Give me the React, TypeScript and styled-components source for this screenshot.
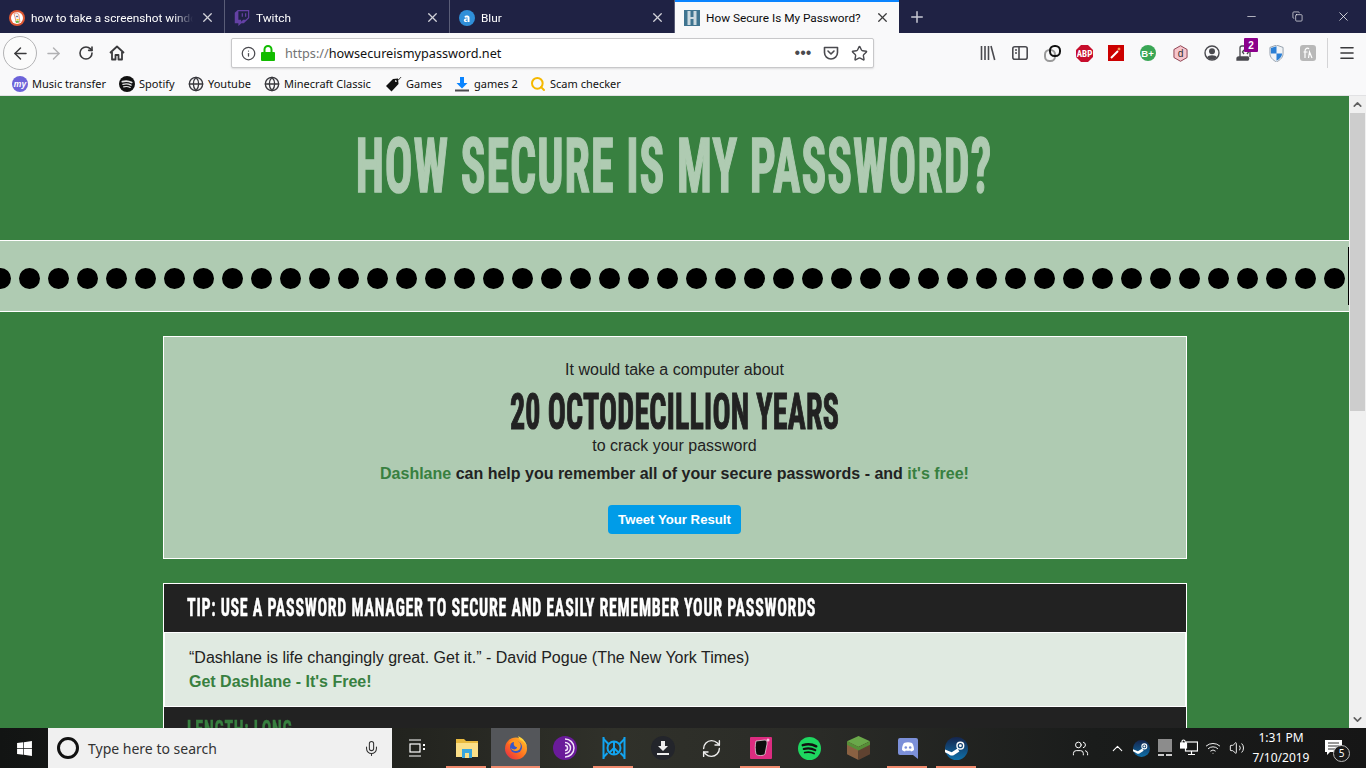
import React from "react";
import styled, { createGlobalStyle } from "styled-components";
import { ArrowLeft, ArrowRight, RotateCw, Info, Star, X, Plus, Minus, Menu, Mic, Search, Globe, ChevronUp, ChevronDown, RefreshCw, Volume2, Wifi, Users, Copy } from "lucide-react";
import { FaWindows, FaTwitch } from "react-icons/fa";

const Global = createGlobalStyle`
  html, body { margin: 0; padding: 0; width: 1366px; height: 768px; overflow: hidden; background: #388040; }
  #root { width: 1366px; height: 768px; }
  * { box-sizing: border-box; }
`;

const Screen = styled.div`
  width: 1366px; height: 768px; display: flex; flex-direction: column; overflow: hidden;
  font-family: "Liberation Sans", Arial, sans-serif;
`;

const TabBar = styled.div`
  height: 33px; background: #1f2244; display: flex; flex: none; color: #fff;
  font-family: Roboto, sans-serif; font-size: 11.8px;
`;
const Tab = styled.div<{ $active?: boolean }>`
  width: 224px; height: 33px; flex: none; display: flex; align-items: center; padding: 0 9px;
  margin-right: 1px; position: relative; gap: 6px;
  background: ${p => (p.$active ? "#f9f9fa" : "transparent")};
  color: ${p => (p.$active ? "#0c0c0d" : "#fff")};
  border-top: 2px solid ${p => (p.$active ? "#0a84ff" : "transparent")};
  box-shadow: ${p => (p.$active ? "none" : "1px 0 0 #5a5d77")};
`;
const TabTitle = styled.span`
  flex: 1; min-width: 0; white-space: nowrap; overflow: hidden; text-overflow: clip;
  -webkit-mask-image: linear-gradient(to right, #000 88%, transparent 100%);
  mask-image: linear-gradient(to right, #000 88%, transparent 100%);
`;
const ActiveTitle = styled.span`
  flex: 1; min-width: 0; white-space: nowrap;
`;
const Favicon = styled.span`
  width: 16px; height: 16px; flex: none; display: flex; align-items: center; justify-content: center;
`;
const TabClose = styled.span`
  flex: none; width: 16px; display: flex; align-items: center; justify-content: center; opacity: .8;
`;
const NewTab = styled.div`
  width: 34px; display: flex; align-items: center; justify-content: center; color: #c8c9d3;
`;
const WindowButtons = styled.div`
  margin-left: auto; display: flex; color: #fff;
`;
const WindowButton = styled.div`
  width: 46px; height: 33px; display: flex; align-items: center; justify-content: center;
`;

const NavBar = styled.div`
  height: 35px; padding-top: 5px; flex: none; background: #f9f9fa; display: flex; align-items: center; position: relative;
`;
const BackButton = styled.div`
  width: 34px; height: 34px; margin-left: 3px; border-radius: 50%; border: 1px solid #b3b3b5; background: #fbfbfb;
  display: flex; align-items: center; justify-content: center; color: #3a3a3c; flex: none;
`;
const NavIcon = styled.div<{ $w: number; $c?: string }>`
  width: ${p => p.$w}px; display: flex; justify-content: center; align-items: center; flex: none;
  color: ${p => p.$c ?? "#3a3a3c"};
`;
const UrlBar = styled.div`
  width: 643px; height: 30px; margin-left: 100px; background: #fff; border: 1px solid #c8c8ca; border-radius: 2px;
  box-shadow: 0 1px 2px rgba(0,0,0,.12); display: flex; align-items: center; padding: 0 0 0 9px; flex: none; color: #4a4a4f;
`;
const UrlText = styled.span`
  font-family: "Noto Sans", sans-serif; font-size: 12.7px; color: #111; margin-left: 5px; flex: 1;
`;
const UrlScheme = styled.span` color: #737373; `;
const UrlAction = styled.span<{ $w: number }>`
  width: ${p => p.$w}px; display: flex; justify-content: center; align-items: center; flex: none;
`;
const ExtensionArea = styled.div`
  margin-left: 98px; display: flex; align-items: center; height: 28px; position: relative;
`;
const Extension = styled.div`
  width: 32px; display: flex; justify-content: center; align-items: center; flex: none; position: relative; color: #4a4a4f;
`;
const Badge = styled.span`
  position: absolute; left: 16px; top: -7px; width: 14px; height: 14px; background: #8b008b; color: #fff; font-size: 10px; font-weight: 700;
  display: flex; align-items: center; justify-content: center; border-radius: 1px;
`;
const ToolbarDivider = styled.div`
  width: 1px; height: 30px; background: #d4d4d6; margin-left: 3px;
`;
const MenuButton = styled.div`
  width: 38px; display: flex; justify-content: center; color: #3a3a3c;
`;

const Bookmarks = styled.div`
  height: 28px; flex: none; background: #f9f9fa; border-bottom: 1px solid #e2e2e4; display: flex; align-items: center;
  padding: 4px 0 0 12px; gap: 12px; font-family: "Noto Sans", sans-serif; font-size: 11px; color: #111;
`;
const Bookmark = styled.div`
  display: flex; align-items: center; gap: 4px; white-space: nowrap;
`;
const BookmarkIcon = styled.span`
  width: 16px; height: 16px; display: flex; align-items: center; justify-content: center; flex: none; color: #38383d;
`;
const BookmarkLabel = styled.span<{ $w: number }>`
  width: ${p => p.$w}px; display: block;
`;

const Viewport = styled.div`
  flex: 1; min-height: 0; display: flex; background: #388040;
`;
const Page = styled.div`
  width: 1349px; flex: none; overflow: hidden; display: flex; flex-direction: column; position: relative;
`;
const Scrollbar = styled.div`
  width: 17px; flex: none; background: #f0f0f0; display: flex; flex-direction: column; color: #606060;
`;
const ScrollButton = styled.div`
  height: 17px; flex: none; display: flex; align-items: center; justify-content: center;
`;
const ScrollThumb = styled.div`
  height: 298px; margin: 0 1px; background: #cdcdcd; flex: none;
`;
const ScrollSpace = styled.div` flex: 1; `;

const Condensed = styled.span<{ $tall: number; $stroke: number }>`
  display: inline-block; white-space: nowrap; transform: scaleY(${p => p.$tall}); line-height: .8;
  font-family: Roboto, sans-serif; font-stretch: 75%; font-weight: 700;
  -webkit-text-stroke: ${p => p.$stroke}px currentColor;
`;
const Header = styled.header`
  height: 144px; flex: none; display: flex; align-items: center; justify-content: center; padding: 0 1px 4px 0;
`;
const Title = styled.h1`
  margin: 0; font-size: 46px; line-height: 80px; letter-spacing: 1px; color: #afcbb2; font-weight: 700;
`;
const PasswordBand = styled.div`
  height: 72px; flex: none; background: #afcbb2; border-top: 1px solid #fff; border-bottom: 1px solid #fff;
  display: flex; align-items: center; gap: 8px; margin-left: -10.5px; position: relative; overflow: hidden; padding-top: 4px;
`;
const Dot = styled.span`
  width: 21px; height: 21px; flex: none; border-radius: 50%; background: #000;
`;
const Caret = styled.span`
  position: absolute; left: 1358px; top: 6px; width: 1px; height: 58px; background: #000;
`;
const Content = styled.main`
  width: 1024px; margin: 24px auto 0 163px; flex: none; color: #222;
`;
const ResultCard = styled.section`
  height: 223px; background: #afcbb2; border: 1px solid #fff; display: flex; flex-direction: column; align-items: center;
  padding: 22px 1px 0 0; font-size: 16px;
`;
const PlainLine = styled.div` height: 22px; line-height: 22px; `;
const BigLine = styled.div`
  height: 46px; line-height: 46px; margin-top: 8px; font-size: 30px; letter-spacing: .2px; color: #222;
`;
const PitchLine = styled.div`
  margin-top: 6px; height: 22px; line-height: 22px; font-weight: 700;
`;
const GreenLink = styled.span` color: #388040; font-weight: 700; `;
const TweetButton = styled.button`
  margin-top: 20px; width: 133px; height: 29px; border: 0; border-radius: 4px; background: #009ce8; color: #fff;
  font: 700 13.2px "Liberation Sans", sans-serif; padding: 0;
`;
const TipCard = styled.section`
  margin-top: 24px; border: 1px solid #fff; border-bottom: 0; background: #fff;
`;
const TipHeader = styled.div`
  height: 48px; background: #222; color: #fff; display: flex; align-items: center; padding-left: 23px; font-size: 16px; letter-spacing: .7px;
`;
const TipBody = styled.div`
  margin: 1px 1px 0; height: 73px; background: #e0eae1; padding: 13px 0 0 24px; font-size: 16px; line-height: 24px;
`;
const LengthHeader = styled.div`
  margin-top: 1px; height: 48px; background: #222; color: #388040; display: flex; align-items: center; padding: 0 0 2px 23px; font-size: 16px; letter-spacing: .7px;
`;

const Taskbar = styled.div`
  height: 40px; flex: none; display: flex; color: #fff; position: relative; padding-right: 13px;
  background: linear-gradient(to right, #121413 0%, #23241f 30%, #30312a 45%, #2a2b27 60%, #1a1c1b 80%, #161616 100%);
`;
const StartButton = styled.div`
  width: 48px; display: flex; align-items: center; justify-content: center; flex: none; color: #fff;
`;
const SearchBox = styled.div`
  width: 344px; flex: none; background: #f0f0f0; color: #333; display: flex; align-items: center; padding: 0 12px 0 9px;
  font-family: "Noto Sans", sans-serif; font-size: 14px;
`;
const Cortana = styled.span`
  width: 22px; height: 22px; border: 3px solid #111; border-radius: 50%; margin-right: 9px; flex: none;
`;
const SearchHint = styled.span` flex: 1; `;
const TaskView = styled.div`
  width: 50px; flex: none; display: flex; align-items: center; justify-content: center;
`;
const TaskItem = styled.div<{ $open?: boolean; $active?: boolean }>`
  width: 49px; height: 40px; flex: none; display: flex; align-items: center; justify-content: center; position: relative;
  background: ${p => (p.$active ? "#54565a" : "transparent")};
  &::after {
    content: ""; position: absolute; bottom: 0; height: 2px; background: #f08a6d;
    left: ${p => (p.$active ? "0" : "4px")}; right: ${p => (p.$active ? "0" : "5px")};
    display: ${p => (p.$open ? "block" : "none")};
  }
`;
const TraySpace = styled.div` flex: 1; `;
const Tray = styled.div`
  display: flex; align-items: center; color: #fff; flex: none;
`;
const TrayIcon = styled.span<{ $w: number }>`
  width: ${p => p.$w}px; display: flex; align-items: center; justify-content: center; flex: none;
`;
const Clock = styled.div`
  width: 64px; flex: none; text-align: center; font-family: "Noto Sans", sans-serif; font-size: 12px; line-height: 20px;
`;
const Notification = styled.div`
  width: 40px; flex: none; display: flex; align-items: center; justify-content: center; position: relative;
`;
const NotifyCount = styled.span`
  position: absolute; left: 20px; top: 17px; width: 17px; height: 17px; border: 1px solid #bbb; border-radius: 50%; background: #1a1a1a;
  font-family: "Noto Sans", sans-serif; font-size: 10px; line-height: 15px; text-align: center;
`;

const DuckIcon = () => (
  <svg width="16" height="16" viewBox="0 0 16 16"><circle cx="8" cy="8" r="8" fill="#de5833" /><circle cx="8" cy="8" r="6" fill="#fff" /><path d="M5 4c2-2 5-1 5 2l1 6H7L6 7z" fill="#f4f4f4" stroke="#de5833" strokeWidth=".6" /><circle cx="8" cy="6.500" r=".8" fill="#2d4f8e" /><path d="M7 9h3l-1 1.500z" fill="#fdd20a" /><path d="M6.500 11l3-.5.5 2-3 .5z" fill="#65bc46" /></svg>
);
const BlurIcon = () => (
  <svg width="16" height="16" viewBox="0 0 16 16"><circle cx="8" cy="8" r="8" fill="#2f8fd9" /><path d="M5.500 6.200c1-1.200 5-1.200 5 1.200V12H9v-.7c-1.500 1.300-4.200 1-4.200-1 0-2 2.700-2 4.200-1.800 0-1.300-1.900-1.300-3-.6zM9 9.600c-1-.2-2.500-.2-2.500.7 0 .9 1.800.9 2.500 0z" fill="#fff" /></svg>
);
const HIcon = () => (
  <svg width="16" height="16" viewBox="0 0 16 16"><rect width="16" height="16" fill="#3f7490" /><rect x="3.500" y="1" width="3" height="14" fill="#cbd9e0" /><rect x="9.500" y="1" width="3" height="14" fill="#cbd9e0" /><rect x="6" y="7" width="4" height="2" fill="#cbd9e0" /></svg>
);
const HomeIcon = () => (
  <svg width="16" height="16" viewBox="0 0 16 16" fill="none" stroke="#3a3a3c" strokeWidth="1.800" strokeLinejoin="round"><path d="M1 8l7-6.500L15 8" /><path d="M3 7v7.500h3.500V10h3v4.500H13V7" /></svg>
);
const LockIcon = () => (
  <svg width="14" height="16" viewBox="0 0 14 16"><path d="M3.500 7V4.500a3.500 3.500 0 0 1 7 0V7" fill="none" stroke="#12bc00" strokeWidth="2" /><rect y="7" width="14" height="9" rx="1" fill="#12bc00" /></svg>
);
const PocketIcon = () => (
  <svg width="16" height="16" viewBox="0 0 16 16" fill="none" stroke="#4a4a4f" strokeWidth="1.600"><path d="M1.500 2.500h13v5a6.500 6.500 0 0 1-13 0z" strokeLinejoin="round" /><path d="M5 6l3 3 3-3" strokeLinecap="round" strokeLinejoin="round" /></svg>
);
const LibraryIcon = () => (
  <svg width="16" height="16" viewBox="0 0 16 16" fill="none" stroke="#4a4a4f" strokeWidth="1.600"><path d="M1.500 1v14M5 1v14M8.500 1v14M11 1l3.700 14" /></svg>
);
const SidebarIcon = () => (
  <svg width="16" height="16" viewBox="0 0 16 16" fill="none" stroke="#4a4a4f" strokeWidth="1.600"><rect x=".8" y="1.800" width="14.400" height="12.400" rx="2" /><path d="M7 2v12M3 5h2M3 8h2" /></svg>
);
const ChainIcon = () => (
  <svg width="17" height="17" viewBox="0 0 17 17" fill="none"><rect x="1" y="5" width="10" height="11" rx="4.500" stroke="#9a9a9a" strokeWidth="2" /><rect x="6" y="1" width="10" height="10" rx="4.500" stroke="#111" strokeWidth="2" /></svg>
);
const AbpIcon = () => (
  <svg width="17" height="17" viewBox="0 0 17 17"><path d="M5 0h7l5 5v7l-5 5H5l-5-5V5z" fill="#c70d2c" /><text x="8.500" y="11.500" textAnchor="middle" fontFamily="Roboto" fontStretch="75%" fontWeight="700" fontSize="9" fill="#fff">ABP</text></svg>
);
const WandIcon = () => (
  <svg width="16" height="16" viewBox="0 0 16 16"><rect width="16" height="16" fill="#cc0000" /><path d="M3 13L10 6" stroke="#fff" strokeWidth="2" /><path d="M11 2l.6 1.600L13 4l-1.400.6L11 6l-.6-1.400L9 4l1.400-.4z" fill="#ffd27a" /></svg>
);
const BPlusIcon = () => (
  <svg width="16" height="16" viewBox="0 0 16 16"><circle cx="8" cy="8" r="8" fill="#3aa655" /><text x="7.500" y="11.500" textAnchor="middle" fontFamily="Liberation Sans" fontWeight="700" fontSize="9.500" fill="#fff">B+</text></svg>
);
const DIcon = () => (
  <svg width="15" height="17" viewBox="0 0 16 18"><path d="M8 .7l7 4v8.600l-7 4-7-4V4.700z" fill="#f7c5cc" stroke="#8a3b4a" strokeWidth="1" /><text x="8" y="13" textAnchor="middle" fontFamily="Liberation Sans" fontSize="11" fill="#333">d</text></svg>
);
const ProfileIcon = () => (
  <svg width="16" height="16" viewBox="0 0 16 16" fill="none"><circle cx="8" cy="8" r="7" stroke="#4a4a4f" strokeWidth="1.400" /><circle cx="8" cy="6.300" r="3" fill="#4a4a4f" /><path d="M3 12.500c1-3 9-3 10 0a7 7 0 0 1-10 0z" fill="#4a4a4f" /></svg>
);
const CodeIcon = () => (
  <svg width="16" height="16" viewBox="0 0 16 16" fill="none" stroke="#4a4a4f" strokeWidth="1.300"><path d="M4 12V3a2 2 0 0 1 2-2h8v11" /><path d="M1 15h11a2 2 0 0 0 0-3H3a1.500 1.500 0 0 0-2 1.500z" fill="#4a4a4f" /><path d="M8 5L6.500 7 8 9M11 5l1.500 2L11 9" /></svg>
);
const ShieldIcon = () => (
  <svg width="15" height="17" viewBox="0 0 16 18"><path d="M8 0l7 2.500V9c0 4-3 7-7 9-4-2-7-5-7-9V2.500z" fill="#f0f3f6" stroke="#7b8a98" strokeWidth=".8" /><path d="M8 1.200V9H2V3.200zM8 9h6c-.2 3.800-2.800 6-6 7.600z" fill="#2a7fd5" /></svg>
);
const GreyExtIcon = () => (
  <svg width="16" height="16" viewBox="0 0 16 16"><rect width="16" height="16" rx="3" fill="#b8b8b8" /><path d="M5 13V6c0-3 3-3.500 4-2M3.500 7h4M8.500 13l1-6 2.500 6" fill="none" stroke="#fff" strokeWidth="1.200" /></svg>
);
const MuIcon = () => (
  <svg width="16" height="16" viewBox="0 0 16 16"><circle cx="8" cy="8" r="8" fill="#6c63d9" /><text x="8" y="11" textAnchor="middle" fontFamily="Liberation Sans" fontStyle="italic" fontWeight="700" fontSize="8.500" fill="#fff">my</text></svg>
);
const SpotifyMark = ({ size, disc, arc }: { size: number; disc: string; arc: string }) => (
  <svg width={size} height={size} viewBox="0 0 24 24" fill="none" stroke={arc} strokeLinecap="round"><circle cx="12" cy="12" r="12" fill={disc} stroke="none" /><path d="M5 8.500c4.500-1.400 10-1 14 1.200" strokeWidth="2.600" /><path d="M6 12.500c4-1.100 8.500-.7 12 1.200" strokeWidth="2.200" /><path d="M7 16.200c3.300-.8 7-.5 9.800 1" strokeWidth="1.800" /></svg>
);
const TagIcon = () => (
  <svg width="16" height="16" viewBox="0 0 16 16"><path d="M0 10l7-7 5-.5L12.500 8l-7 7.500z" fill="#111" /><circle cx="10" cy="5" r="1" fill="#f9f9fa" /><path d="M10 5c2-1 4-2 5-4" fill="none" stroke="#111" strokeWidth=".8" /></svg>
);
const BookmarkDownload = () => (
  <svg width="16" height="16" viewBox="0 0 16 16"><path d="M6 1h4v6h3.500L8 12.500 2.500 7H6z" fill="#0a84ff" /><rect x="1" y="13.500" width="14" height="2" fill="#4a4a4f" /></svg>
);
const FolderIcon = () => (
  <svg width="22" height="20" viewBox="0 0 22 20"><path d="M0 1h8l2 2h12v16H0z" fill="#e8b93f" /><rect y="5" width="22" height="14" fill="#fbdf88" /><rect x="6" y="11" width="10" height="9" fill="#39a6dd" /><rect x="9" y="15" width="4" height="5" fill="#fbdf88" /></svg>
);
const FirefoxIcon = () => (
  <svg width="24" height="24" viewBox="0 0 24 24"><defs><linearGradient id="ff" x1="1" y1="0" x2="0" y2="1"><stop offset="0" stopColor="#ffcb2d" /><stop offset=".55" stopColor="#ff6b1e" /><stop offset="1" stopColor="#e0224f" /></linearGradient></defs><circle cx="12" cy="12.500" r="11" fill="url(#ff)" /><path d="M14 0c5 2 9 7 9 12 0-3-3-7-7-8z" fill="#ffd23c" /><circle cx="12" cy="11" r="6" fill="#3556c8" /><path d="M4 8c3-4 8-5 10-3 3 2 4 6 1 9-3 2-7 1-8-2 2 2 6 2 6-1-2 0-4-2-3-5-2 0-4 1-6 2z" fill="#ff9a1f" /></svg>
);
const TorIcon = () => (
  <svg width="24" height="24" viewBox="0 0 24 24" fill="none"><circle cx="12" cy="12" r="12" fill="#6a1b9a" /><path d="M12 3a9 9 0 0 1 0 18M12 6.500a5.500 5.500 0 0 1 0 11M12 9.500a2.500 2.500 0 0 1 0 5" stroke="#f0e2f8" strokeWidth="1.500" /></svg>
);
const PeaceIcon = () => (
  <svg width="24" height="24" viewBox="0 0 24 24" fill="none" stroke="#12a4f0" strokeWidth="2"><path d="M1.500 1v22M22.500 1v22" /><circle cx="12" cy="12" r="6.500" /><path d="M12 5.500v13M12 12l-4.600 4.600M12 12l4.600 4.600M1.500 3l5 5M22.500 3l-5 5M1.500 21l4-4M22.500 21l-4-4" /></svg>
);
const DownloaderIcon = () => (
  <svg width="24" height="24" viewBox="0 0 24 24"><circle cx="12" cy="12" r="12" fill="#23252b" /><path d="M10 5h4v5h3l-5 5-5-5h3z" fill="#eee" /><rect x="6" y="17" width="12" height="2" fill="#eee" /></svg>
);
const PinkIcon = () => (
  <svg width="22" height="22" viewBox="0 0 22 22"><rect x="0" y="0" width="22" height="22" rx="1" fill="#dc2c80" /><path d="M6 4l9-1c2 0 2 2 2 4l-2 10c-1 2-8 2-9 0-1-4-1-9 0-13z" fill="#0d0d0d" stroke="#eee" strokeWidth=".7" /><circle cx="18" cy="3" r="1.500" fill="#f5c3dc" /></svg>
);
const CubeIcon = () => (
  <svg width="23" height="24" viewBox="0 0 24 25"><path d="M12 0l12 5.500-12 6L0 5.500z" fill="#6aa84a" /><path d="M0 5.500l12 6V25L0 19z" fill="#8a6142" /><path d="M24 5.500l-12 6V25l12-6z" fill="#5f4230" /><path d="M0 5.500l12 6v3.500L0 9zM24 5.500l-12 6v3.500l12-6z" fill="#568f37" /></svg>
);
const DiscordTile = () => (
  <svg width="20" height="21" viewBox="0 0 20 21"><path d="M2 0h16a2 2 0 0 1 2 2v19l-5-4H2a2 2 0 0 1-2-2V2a2 2 0 0 1 2-2z" fill="#7c90d9" /><path d="M6 5c2.500-1 5.500-1 8 0 1.500 2 2 4 2 7-1 .9-2 1.300-3 1.500l-.8-1.100c-1.500.4-2.900.4-4.400 0L7 13.500c-1-.2-2-.6-3-1.500 0-3 .5-5 2-7z" fill="#fff" /><circle cx="7.800" cy="9.500" r="1.300" fill="#7c90d9" /><circle cx="12.200" cy="9.500" r="1.300" fill="#7c90d9" /></svg>
);
const SteamTile = ({ size }: { size: number }) => (
  <svg width={size} height={size} viewBox="0 0 24 24"><defs><linearGradient id={`st${size}`} x1="0" y1="0" x2="0" y2="1"><stop offset="0" stopColor="#15254d" /><stop offset="1" stopColor="#0f6fa8" /></linearGradient></defs><circle cx="12" cy="12" r="12" fill={`url(#st${size})`} /><circle cx="16" cy="9" r="3.500" fill="none" stroke="#fff" strokeWidth="1.500" /><circle cx="16" cy="9" r="1.500" fill="#fff" /><path d="M0 13l7 3 6-4 2 3-6 4c-2 1-4 0-5-1L0 16z" fill="#fff" /></svg>
);
const MonitorStack = () => (
  <svg width="16" height="18" viewBox="0 0 16 18"><rect x="1" y="0" width="14" height="13" fill="#8c8c8c" /><path d="M1 15h6v2H1zM9 15h6v2H9z" fill="#ccc" /></svg>
);
const NetLock = () => (
  <svg width="18" height="18" viewBox="0 0 18 18" fill="none" stroke="#fff" strokeWidth="1.200"><rect x="5.500" y="3" width="12" height="9" /><path d="M11.500 12v3M8 15.500h7" /><rect x=".5" y="4" width="6" height="5" fill="#fff" /><path d="M2 4V2.500a1.500 1.500 0 0 1 3 0" /></svg>
);
const NotifyIcon = () => (
  <svg width="17" height="16" viewBox="0 0 17 16"><path d="M0 0h17v12H5l-3 3v-3H0z" fill="#fff" /><path d="M3 3h11M3 6h11M3 9h7" stroke="#333" strokeWidth="1" /></svg>
);

const tabs = [
  { title: "how to take a screenshot windows", icon: <DuckIcon /> },
  { title: "Twitch", icon: <FaTwitch size={16} color="#6441a4" /> },
  { title: "Blur", icon: <BlurIcon /> },
];
const bookmarks = [
  { label: "Music transfer", w: 75, icon: <MuIcon /> },
  { label: "Spotify", w: 37, icon: <SpotifyMark size={16} disc="#111" arc="#e6e6e6" /> },
  { label: "Youtube", w: 44, icon: <Globe size={16} /> },
  { label: "Minecraft Classic", w: 90, icon: <Globe size={16} /> },
  { label: "Games", w: 36, icon: <TagIcon /> },
  { label: "games 2", w: 44, icon: <BookmarkDownload /> },
  { label: "Scam checker", w: 73, icon: <Search size={16} color="#f5b800" strokeWidth={3} /> },
];
const extensions = [
  <LibraryIcon />, <SidebarIcon />, <ChainIcon />, <AbpIcon />, <WandIcon />, <BPlusIcon />, <DIcon />, <ProfileIcon />,
];
const taskItems = [
  { icon: <FolderIcon />, open: true },
  { icon: <FirefoxIcon />, open: true, active: true },
  { icon: <TorIcon /> },
  { icon: <PeaceIcon />, open: true },
  { icon: <DownloaderIcon /> },
  { icon: <RefreshCw size={21} color="#eee" strokeWidth={1.600} /> },
  { icon: <PinkIcon />, open: true },
  { icon: <SpotifyMark size={23} disc="#1ed760" arc="#111" /> },
  { icon: <CubeIcon /> },
  { icon: <DiscordTile />, open: true },
  { icon: <SteamTile size={23} />, open: true },
];

export default function App() {
  return (
    <Screen>
      <Global />
      <TabBar>
        {tabs.map(t => (
          <Tab key={t.title}>
            <Favicon>{t.icon}</Favicon>
            <TabTitle>{t.title}</TabTitle>
            <TabClose><X size={15} /></TabClose>
          </Tab>
        ))}
        <Tab $active>
          <Favicon><HIcon /></Favicon>
          <ActiveTitle>How Secure Is My Password?</ActiveTitle>
          <TabClose><X size={15} /></TabClose>
        </Tab>
        <NewTab><Plus size={18} /></NewTab>
        <WindowButtons>
          <WindowButton><Minus size={13} strokeWidth={1.200} /></WindowButton>
          <WindowButton><Copy size={11} strokeWidth={1.400} /></WindowButton>
          <WindowButton><X size={15} strokeWidth={1.200} /></WindowButton>
        </WindowButtons>
      </TabBar>
      <NavBar>
        <BackButton><ArrowLeft size={19} strokeWidth={1.800} /></BackButton>
        <NavIcon $w={32} $c="#b1b1b3"><ArrowRight size={19} strokeWidth={1.800} /></NavIcon>
        <NavIcon $w={34}><RotateCw size={16} strokeWidth={2.400} /></NavIcon>
        <NavIcon $w={28}><HomeIcon /></NavIcon>
        <UrlBar>
          <Info size={15} />
          <NavIcon $w={24}><LockIcon /></NavIcon>
          <UrlText><UrlScheme>https://</UrlScheme>howsecureismypassword.net</UrlText>
          <UrlAction $w={28}>•••</UrlAction>
          <UrlAction $w={28}><PocketIcon /></UrlAction>
          <UrlAction $w={28}><Star size={17} strokeWidth={2} /></UrlAction>
        </UrlBar>
        <ExtensionArea>
          {extensions.map((e, i) => <Extension key={i}>{e}</Extension>)}
          <Extension><CodeIcon /><Badge>2</Badge></Extension>
          <Extension><ShieldIcon /></Extension>
          <Extension><GreyExtIcon /></Extension>
        </ExtensionArea>
        <ToolbarDivider />
        <MenuButton><Menu size={18} strokeWidth={2.200} /></MenuButton>
      </NavBar>
      <Bookmarks>
        {bookmarks.map(b => (
          <Bookmark key={b.label}>
            <BookmarkIcon>{b.icon}</BookmarkIcon>
            <BookmarkLabel $w={b.w}>{b.label}</BookmarkLabel>
          </Bookmark>
        ))}
      </Bookmarks>
      <Viewport>
        <Page>
          <Header>
            <Title><Condensed $tall={1.640} $stroke={.9}>HOW SECURE IS MY PASSWORD?</Condensed></Title>
          </Header>
          <PasswordBand>
            {Array.from({ length: 47 }, (_, i) => <Dot key={i} />)}
            <Caret />
          </PasswordBand>
          <Content>
            <ResultCard>
              <PlainLine>It would take a computer about</PlainLine>
              <BigLine><Condensed $tall={1.680} $stroke={.7}>20 OCTODECILLION YEARS</Condensed></BigLine>
              <PlainLine>to crack your password</PlainLine>
              <PitchLine><GreenLink>Dashlane</GreenLink> can help you remember all of your secure passwords - and <GreenLink>it's free!</GreenLink></PitchLine>
              <TweetButton>Tweet Your Result</TweetButton>
            </ResultCard>
            <TipCard>
              <TipHeader><Condensed $tall={1.580} $stroke={.3}>TIP: USE A PASSWORD MANAGER TO SECURE AND EASILY REMEMBER YOUR PASSWORDS</Condensed></TipHeader>
              <TipBody>
                “Dashlane is life changingly great. Get it.” - David Pogue (The New York Times)<br />
                <GreenLink>Get Dashlane - It's Free!</GreenLink>
              </TipBody>
              <LengthHeader><Condensed $tall={1.580} $stroke={.3}>LENGTH: LONG</Condensed></LengthHeader>
            </TipCard>
          </Content>
        </Page>
        <Scrollbar>
          <ScrollButton><ChevronUp size={13} strokeWidth={3} /></ScrollButton>
          <ScrollThumb />
          <ScrollSpace />
          <ScrollButton><ChevronDown size={13} strokeWidth={3} /></ScrollButton>
        </Scrollbar>
      </Viewport>
      <Taskbar>
        <StartButton><FaWindows size={17} /></StartButton>
        <SearchBox>
          <Cortana />
          <SearchHint>Type here to search</SearchHint>
          <Mic size={17} strokeWidth={1.500} />
        </SearchBox>
        <TaskView>
          <svg width="16" height="18" viewBox="0 0 16 18" fill="none" stroke="#fff" strokeWidth="1.200"><path d="M0 1h12M0 17h12" /><rect x="1" y="5" width="10" height="8" /><rect x="14" y="5" width="2" height="2" fill="#fff" stroke="none" /><rect x="14" y="9" width="2" height="2" fill="#fff" stroke="none" /></svg>
        </TaskView>
        {taskItems.map((t, i) => <TaskItem key={i} $open={t.open} $active={t.active}>{t.icon}</TaskItem>)}
        <TraySpace />
        <Tray>
          <TrayIcon $w={50}><Users size={17} strokeWidth={1.400} /></TrayIcon>
          <TrayIcon $w={24}><ChevronUp size={17} strokeWidth={1.500} /></TrayIcon>
          <TrayIcon $w={24}><SteamTile size={17} /></TrayIcon>
          <TrayIcon $w={24}><MonitorStack /></TrayIcon>
          <TrayIcon $w={24}><NetLock /></TrayIcon>
          <TrayIcon $w={24}><Wifi size={16} strokeWidth={1.400} /></TrayIcon>
          <TrayIcon $w={24}><Volume2 size={16} strokeWidth={1.400} /></TrayIcon>
        </Tray>
        <Clock>1:31 PM<br />7/10/2019</Clock>
        <Notification>
          <NotifyIcon />
          <NotifyCount>5</NotifyCount>
        </Notification>
      </Taskbar>
    </Screen>
  );
}
